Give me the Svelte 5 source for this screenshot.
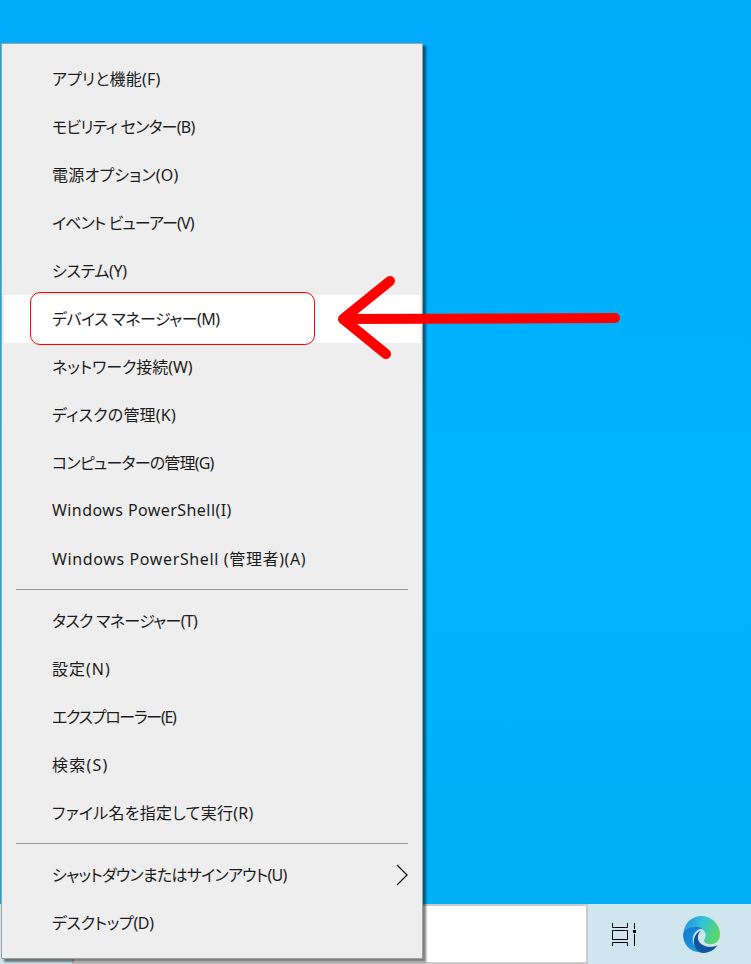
<script>
  // track: letter-spacing per label, the long katakana runs sit tighter in the original font
  const groups = [
    [
      { label: 'アプリと機能(F)', track: 0.2 },
      { label: 'モビリティ センター(B)', track: -0.75 },
      { label: '電源オプション(O)', track: 0.2 },
      { label: 'イベント ビューアー(V)', track: -0.9 },
      { label: 'システム(Y)', track: -0.3 },
      { label: 'デバイス マネージャー(M)', track: -0.55, marked: true },
      { label: 'ネットワーク接続(W)', track: -0.05 },
      { label: 'ディスクの管理(K)', track: 0.2 },
      { label: 'コンピューターの管理(G)', track: -0.8 },
      { label: 'Windows PowerShell(I)', track: 0.43 },
      { label: 'Windows PowerShell (管理者)(A)', track: 0.63 }
    ],
    [
      { label: 'タスク マネージャー(T)', track: -0.7 },
      { label: '設定(N)', track: 1 },
      { label: 'エクスプローラー(E)', track: -1.3 },
      { label: '検索(S)', track: 1.2 },
      { label: 'ファイル名を指定して実行(R)', track: 0.27 }
    ],
    [
      { label: 'シャットダウンまたはサインアウト(U)', track: -0.73, submenu: true },
      { label: 'デスクトップ(D)', track: -0.33 }
    ]
  ];
</script>

<div class="screen">
  <div class="desktop"></div>

  <div class="taskbar">
    <div class="search"></div>
    <div class="tray-btn task-view">
      <svg width="26" height="25" viewBox="0 0 26 25" fill="none" stroke="#000" stroke-width="1">
        <path d="M1.5 1v4.5h15V1M1.5 8.5h15v9h-15zM1.5 24v-3.5h15V24M23.5 1v6M23.5 12v12" />
        <rect x="22" y="8" width="3" height="3" fill="#000" stroke="none" />
      </svg>
    </div>
    <div class="tray-btn edge">
      <svg width="37" height="37" viewBox="0 0 36 36">
        <defs>
          <linearGradient id="swirl" x1="0" y1="0.3" x2="1" y2="0.6">
            <stop offset="0" stop-color="#2a8fdc" />
            <stop offset="0.45" stop-color="#33c3dc" />
            <stop offset="1" stop-color="#5fd85a" />
          </linearGradient>
          <linearGradient id="body" x1="0" y1="0" x2="0.8" y2="1">
            <stop offset="0" stop-color="#0f78d2" />
            <stop offset="1" stop-color="#1c9be0" />
          </linearGradient>
          <linearGradient id="wave" x1="0" y1="0" x2="1" y2="0.8">
            <stop offset="0" stop-color="#0d4f9f" />
            <stop offset="1" stop-color="#12589f" />
          </linearGradient>
        </defs>
        <path fill="url(#swirl)" d="M0.5 16C1.5 6.5 9 0 18 0c10 0 18 8 18 18 0 5.500-4 9.500-9 9.500-3.500 0-6.500-1.500-6.500-4 0-1 1.500-2 1.500-4.500 0-4-3.500-7.500-8-7.500-6 0-11.500 1.500-13.500 4.500z" />
        <path fill="url(#body)" d="M0.500 16c2-3.500 7.500-5.500 13-5.500 2.500 0 4.500 1 5.500 2-5 0-9.500 4.500-9.500 10.500 0 5.500 3.500 9.500 9 12C8 36.500 0 28 0 18z" />
        <path fill="url(#wave)" d="M33.500 28.500C31 32.500 26 36 20 36c-5.500 0-10-6-9.500-12 0.500-5 3.500-8.500 7-10-2.500 2.500-3 5-3 7 0 4 3 7 7.500 8.500 4 1 8 0.500 11.500-1z" />
      </svg>
    </div>
  </div>

  <nav class="menu">
    {#each groups as group, i}
      {#if i > 0}
        <hr class="sep" />
      {/if}
      {#each group as item}
        <div class="item" class:marked={item.marked}>
          <span class="label" style="letter-spacing: {item.track}px">{item.label}</span>
          {#if item.submenu}
            <svg class="chevron" width="12" height="22" viewBox="0 0 12 22" fill="none" stroke="#111" stroke-width="1.300">
              <path d="M1 1l10 10L1 21" />
            </svg>
          {/if}
          {#if item.marked}
            <div class="outline"></div>
          {/if}
        </div>
      {/each}
    {/each}
  </nav>

  <svg class="arrow" width="751" height="964" viewBox="0 0 751 964" fill="none" stroke="#ff0000" stroke-width="10" stroke-linecap="round" stroke-linejoin="round">
    <path d="M390 281L343 319L386 354M343 319L615 318" />
  </svg>
</div>

<style>
  :global(body) {
    margin: 0;
    background: #00b0f8;
  }

  .screen {
    position: relative;
    display: flex;
    flex-direction: column;
    width: 751px;
    height: 964px;
    overflow: hidden;
    font-family: "Noto Sans", "Noto Sans CJK JP", sans-serif;
    font-feature-settings: "palt";
  }

  .desktop {
    height: 904px;
    background: linear-gradient(180deg, #00aafa 0%, #00b4fe 55%, #00b0f6 100%);
  }

  .taskbar {
    display: flex;
    height: 60px;
    background: #d0e6ef;
  }

  .search {
    box-sizing: border-box;
    width: 516px;
    margin-left: 72px;
    background: #fff;
    border: 2px solid #cbcbcb;
  }

  .tray-btn {
    box-sizing: border-box;
    display: flex;
    align-items: flex-start;
  }

  .task-view {
    width: 62px;
    padding: 18px 0 0 23px;
  }

  .edge {
    flex: 1;
    padding: 12px 0 0 33px;
  }

  .menu {
    position: absolute;
    top: 43px;
    left: 1px;
    box-sizing: border-box;
    width: 422px;
    height: 916px;
    padding: 11px 2px;
    background: #eeeeee;
    border: 1px solid #a0a0a0;
    box-shadow: 3px 3px 2px rgba(0, 0, 0, 0.5);
  }

  .item {
    position: relative;
    display: flex;
    align-items: center;
    justify-content: space-between;
    height: 48px;
    padding-left: 48px;
    font-size: 16px;
    color: #1c1c1c;
  }

  .label {
    position: relative;
    top: -1px;
  }

  .marked {
    background: #fff;
  }

  .outline {
    position: absolute;
    top: -3px;
    left: 26px;
    box-sizing: border-box;
    width: 285px;
    height: 53px;
    border: 1px solid #ff0000;
    border-radius: 10px;
  }

  .chevron {
    margin-right: 12px;
  }

  .sep {
    height: 1px;
    margin: 6px 12px 7px;
    border: none;
    background: #999;
  }

  .arrow {
    position: absolute;
    top: 0;
    left: 0;
    pointer-events: none;
  }
</style>
